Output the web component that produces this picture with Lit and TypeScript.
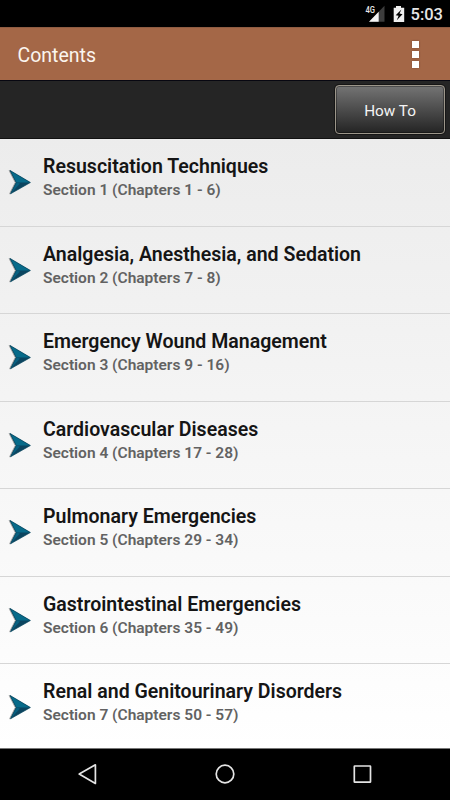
import { LitElement, html, svg, css } from "lit";
import { customElement } from "lit/decorators.js";

const sections = [
  ["Resuscitation Techniques", "1 - 6"],
  ["Analgesia, Anesthesia, and Sedation", "7 - 8"],
  ["Emergency Wound Management", "9 - 16"],
  ["Cardiovascular Diseases", "17 - 28"],
  ["Pulmonary Emergencies", "29 - 34"],
  ["Gastrointestinal Emergencies", "35 - 49"],
  ["Renal and Genitourinary Disorders", "50 - 57"],
];

@customElement("status-bar")
class StatusBar extends LitElement {
  static styles = css`
    :host { display: flex; height: 27px; background: #000; justify-content: flex-end; }
    svg { display: block; width: 46px; height: 27px; }
    .net { font: 500 8.5px Roboto, sans-serif; fill: #e8e8e8; }
    .time { width: 39.5px; font: 500 16.5px/30px Roboto, sans-serif; color: #e6e6e6; white-space: nowrap; }
  `;
  render() {
    return html`
      <svg viewBox="0 0 46 27">
        <path d="M19.5 5.8V21.7H4Z" fill="#3d3d3d" />
        <path d="M13.7 11.8V21.7H4Z" fill="#f4f4f4" />
        <text class="net" x=".5" y="13" textLength="9.5" lengthAdjust="spacingAndGlyphs">4G</text>
        <path d="M31 6H36V7.8H39.2V22H28.7V7.8H31Z" fill="#f0f0f0" />
        <path d="M36.4 9.6L30.7 15.2L33.6 15.8L31.8 20.2L37.5 14.2L34.5 13.6Z" fill="#000" />
      </svg>
      <div class="time">5:03</div>
    `;
  }
}

@customElement("title-bar")
class TitleBar extends LitElement {
  static styles = css`
    :host { display: flex; box-sizing: border-box; height: 53px; padding: 0 31.5px 0 17.5px; align-items: center;
      justify-content: space-between; background: #a46747; border-top: 1px solid #8f5c42; }
    .title { font: 400 19.5px/52px Roboto, sans-serif; color: #fbf5ef; padding-top: 4px; }
    .more { display: grid; gap: 3px; filter: drop-shadow(0 0 1px #7b4930); }
    .dot { width: 7px; height: 7px; background: #fff; }
  `;
  render() {
    return html`
      <div class="title">Contents</div>
      <div class="more"><div class="dot"></div><div class="dot"></div><div class="dot"></div></div>
    `;
  }
}

@customElement("section-row")
class SectionRow extends LitElement {
  static properties = { heading: {}, detail: {} };
  declare heading: string;
  declare detail: string;
  static styles = css`
    :host { display: flex; box-sizing: border-box; height: 87.5px; padding-left: 8px; font-family: Roboto, sans-serif;
      border-bottom: 1px solid #d6d6d6; }
    :host(:last-child) { border-bottom-color: transparent; }
    .arrow { width: 25px; height: 28px; margin: 29px 10px 0 0; flex: none; }
    .heading { font-size: 19.55px; font-weight: 600; line-height: 24px; margin-top: 16.4px; color: #151515; white-space: nowrap; }
    .detail { font-size: 15.5px; font-weight: 600; line-height: 20px; margin-top: 1.1px; color: #626262; white-space: nowrap; }
    .shade { filter: drop-shadow(-0.5px 0.8px 0.7px #0005); }
  `;
  render() {
    return html`
      <svg class="arrow" viewBox="0 0 25 28">
        <g class="shade">
          <path d="M2 2.4L22.4 14.5L2.5 25.8L8.2 14.5Z" fill="#0b4560" />
          <path d="M2 2.4L22.4 14.5H8.2Z" fill="#076b8a" />
          <path d="M2.5 25.8L8.2 14.5L12 15.4Z" fill="#086080" />
          <path d="M2 2.4L22.4 14.5L2.5 25.8L8.2 14.5Z" fill="none" stroke="#07465f" stroke-width=".7" />
        </g>
      </svg>
      <div>
        <div class="heading">${this.heading}</div>
        <div class="detail">${this.detail}</div>
      </div>
    `;
  }
}

@customElement("nav-bar")
class NavBar extends LitElement {
  static styles = css`
    :host { display: flex; box-sizing: border-box; height: 52.5px; background: #000; border-top: 1px solid #777;
      justify-content: space-between; align-items: center; padding: 0 76px; }
    svg { width: 24px; height: 24px; fill: none; stroke: #e4e4e4; stroke-width: 1.7; stroke-linejoin: round; }
  `;
  render() {
    const shapes = [
      svg`<path d="M19.4 2.8V21.4L3.2 12.1Z" />`,
      svg`<circle cx="12" cy="12" r="8.8" />`,
      svg`<rect x="4.3" y="4" width="16.2" height="16.2" rx=".5" />`,
    ];
    return shapes.map((s) => html`<svg viewBox="0 0 24 24">${s}</svg>`);
  }
}

@customElement("app-root")
class AppRoot extends LitElement {
  static styles = css`
    :host { display: flex; flex-direction: column; width: 450px; height: 800px; overflow: hidden; background: #000; }
    .tools { box-sizing: border-box; height: 59px; flex: none; display: flex; justify-content: flex-end; padding: 4px 5px 0 0;
      background: #252525; border-top: 1px solid #070711; border-bottom: 1px solid #111; }
    .howto { box-sizing: border-box; width: 110px; height: 49px; padding: 2px 0 0; border: 1.5px solid #9c968a; border-radius: 4px;
      background: linear-gradient(#747474, #505050 45%, #242424); color: #f4f4f4; font: 400 15.3px Roboto, sans-serif;
      box-shadow: 0 0 0 1px #161616, inset 0 0 0 1px #0005; }
    .list { flex: 1; min-height: 0; overflow: hidden; background: linear-gradient(#ececec, #fff); }
  `;
  render() {
    return html`
      <status-bar></status-bar>
      <title-bar></title-bar>
      <div class="tools"><button class="howto">How To</button></div>
      <div class="list">
        ${sections.map(([name, chapters], i) => html`
          <section-row .heading=${name} .detail=${`Section ${i + 1} (Chapters ${chapters})`}></section-row>`)}
      </div>
      <nav-bar></nav-bar>
    `;
  }
}
